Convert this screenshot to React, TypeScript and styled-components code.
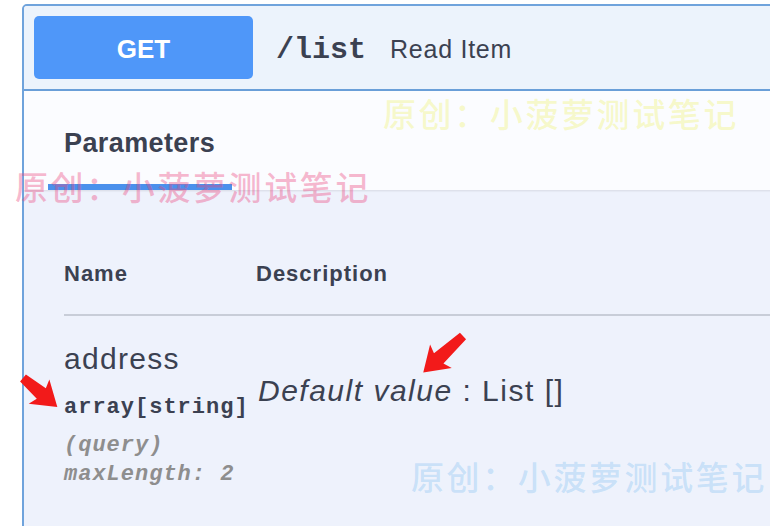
import React from 'react';
import styled, { createGlobalStyle } from 'styled-components';

const Global = createGlobalStyle`
  html, body { margin: 0; padding: 0; background: #ffffff; overflow: hidden; }
  body { font-family: "Liberation Sans", Arial, sans-serif; color: #3b4151; }
`;

const Page = styled.div`
  position: relative;
  width: 770px;
  height: 526px;
  overflow: hidden;
  padding: 4px 0 0 22px;
  box-sizing: border-box;
`;

const Card = styled.div`
  width: 800px;
  height: 560px;
  box-sizing: border-box;
  border: 2px solid #6fa3dc;
  border-radius: 5px 0 0 0;
  background: #eef2fc;
  overflow: hidden;
`;

const Summary = styled.div`
  display: flex;
  align-items: baseline;
  padding: 10px;
  background: #ecf3fc;
  border-bottom: 2px solid #6a9fd9;
`;

const Method = styled.div`
  width: 219px;
  height: 60px;
  padding-top: 3px;
  border-radius: 5px;
  background: #4f97f9;
  color: #ffffff;
  font: 700 26px/60px "Liberation Sans", Arial, sans-serif;
  text-align: center;
`;

const Path = styled.span`
  margin-left: 23px;
  font: 700 30px "Liberation Mono", "Courier New", monospace;
  color: #3b4151;
`;

const Summary2 = styled.span`
  margin-left: 24px;
  font: 400 25px "Liberation Sans", Arial, sans-serif;
  letter-spacing: 0.75px;
  color: #3b4151;
`;

const TabHeader = styled.div`
  height: 99px;
  box-sizing: border-box;
  padding: 36px 0 0 40px;
  background: #fbfcff;
  box-shadow: 0 1px 2px rgba(0, 0, 0, 0.1);
`;

const TabTitle = styled.div`
  font: 700 27px/32px "Liberation Sans", Arial, sans-serif;
  letter-spacing: 0.4px;
  color: #3b4151;
`;

const TabBar = styled.div`
  width: 184px;
  height: 6px;
  margin: 25px 0 0 -16px;
  background: #4b90ec;
`;

const Table = styled.div`
  padding-left: 40px;
`;

const HeadRow = styled.div`
  display: grid;
  grid-template-columns: 192px 1fr;
  padding: 71px 0 27px;
  border-bottom: 2px solid #c8cdd8;
`;

const HeadCell = styled.div`
  font: 700 22px/26px "Liberation Sans", Arial, sans-serif;
  letter-spacing: 1px;
  color: #3b4151;
`;

const Row = styled.div`
  display: grid;
  grid-template-columns: 194px 1fr;
`;

const NameCell = styled.div`
  padding-top: 26px;
`;

const ParamName = styled.div`
  font: 400 30px/34px "Liberation Sans", Arial, sans-serif;
  letter-spacing: 1.3px;
  color: #3b4151;
`;

const ParamType = styled.div`
  margin-top: 19px;
  font: 700 22px/26px "Liberation Mono", "Courier New", monospace;
  letter-spacing: 1px;
  color: #3b4151;
`;

const ParamMeta = styled.div<{ $first?: boolean }>`
  margin-top: ${(p) => (p.$first ? '10px' : '0')};
  font: italic 700 22px/29px "Liberation Mono", "Courier New", monospace;
  letter-spacing: 1px;
  color: #8e8e8e;
`;

const DescCell = styled.div`
  padding-top: 58px;
  font: 400 30px/34px "Liberation Sans", Arial, sans-serif;
  letter-spacing: 1.5px;
  color: #3b4151;
`;

const Watermark = styled.span<{ $x: number; $y: number; $color: string }>`
  position: absolute;
  left: ${(p) => p.$x}px;
  top: ${(p) => p.$y}px;
  font: 500 33px/36px "Noto Sans CJK SC", sans-serif;
  letter-spacing: 2.6px;
  color: ${(p) => p.$color};
  white-space: nowrap;
  pointer-events: none;
`;

const Overlay = styled.svg`
  position: absolute;
  left: 0;
  top: 0;
  width: 770px;
  height: 526px;
  pointer-events: none;
`;

function Arrow({ x, y, angle, len }: { x: number; y: number; angle: number; len: number }) {
  const pts = [
    [0, -4.5],
    [len - 21, -7],
    [len - 24, -16],
    [len, 0],
    [len - 24, 16],
    [len - 21, 7],
    [0, 4.5],
  ]
    .map((p) => p.join(','))
    .join(' ');
  return <polygon points={pts} fill="#f21a1a" transform={`translate(${x} ${y}) rotate(${angle})`} />;
}

export default function App() {
  return (
    <>
      <Global />
      <Page>
        <Card>
          <Summary>
            <Method>GET</Method>
            <Path>/list</Path>
            <Summary2>Read Item</Summary2>
          </Summary>
          <TabHeader>
            <TabTitle>Parameters</TabTitle>
            <TabBar />
          </TabHeader>
          <Table>
            <HeadRow>
              <HeadCell>Name</HeadCell>
              <HeadCell>Description</HeadCell>
            </HeadRow>
            <Row>
              <NameCell>
                <ParamName>address</ParamName>
                <ParamType>array[string]</ParamType>
                <ParamMeta $first>(query)</ParamMeta>
                <ParamMeta>maxLength: 2</ParamMeta>
              </NameCell>
              <DescCell>
                <i>Default value</i> : List []
              </DescCell>
            </Row>
          </Table>
        </Card>
        <Watermark $x={383} $y={95} $color="rgba(236, 240, 90, 0.32)">原创：小菠萝测试笔记</Watermark>
        <Watermark $x={15} $y={168} $color="rgba(236, 70, 125, 0.38)">原创：小菠萝测试笔记</Watermark>
        <Watermark $x={411} $y={458} $color="rgba(110, 185, 240, 0.3)">原创：小菠萝测试笔记</Watermark>
        <Overlay viewBox="0 0 770 526">
          <Arrow x={23} y={378} angle={40.3} len={45} />
          <Arrow x={463} y={336} angle={137.4} len={54} />
        </Overlay>
      </Page>
    </>
  );
}
